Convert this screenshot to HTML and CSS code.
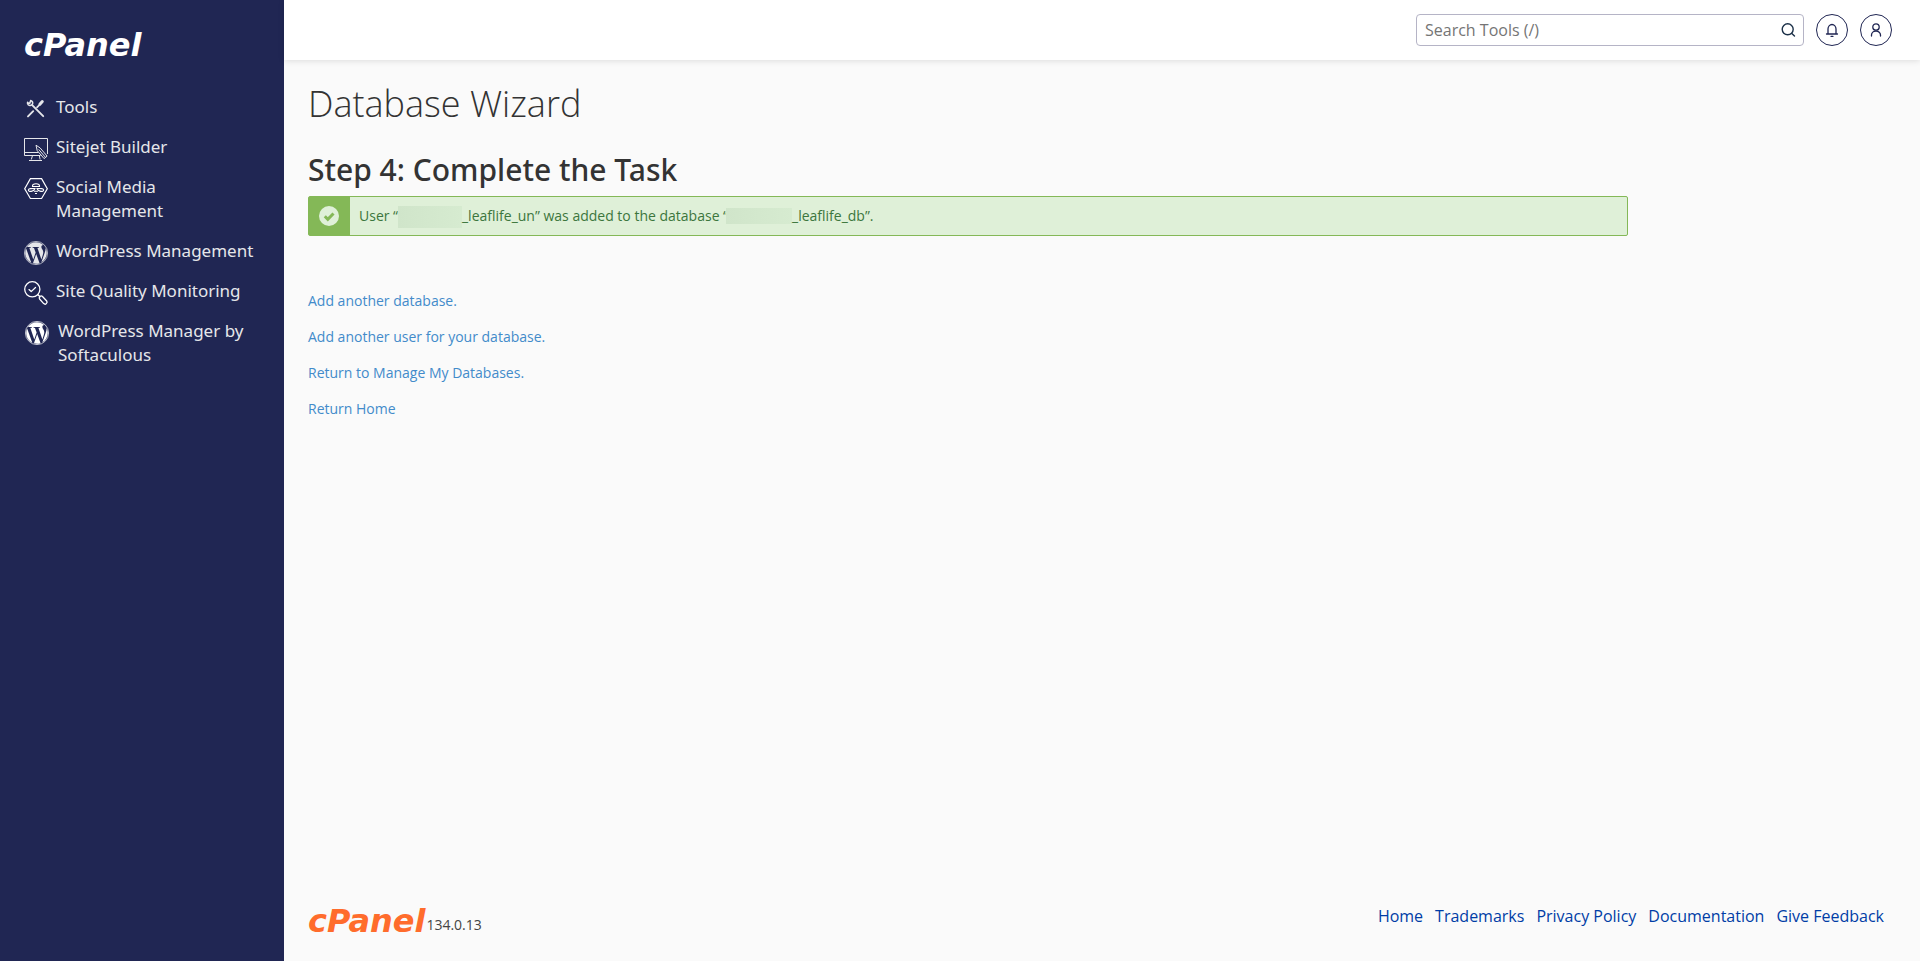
FILE: index.html
```html
<!DOCTYPE html>
<html lang="en">
<head>
<meta charset="utf-8">
<title>cPanel - Database Wizard</title>
<link rel="stylesheet" href="styles.css">
</head>
<body>
<svg class="defs" width="0" height="0" aria-hidden="true">
  <symbol id="wordpress" viewBox="0 0 24 24">
    <path fill="currentColor" d="M21.469 6.825c.84 1.537 1.318 3.3 1.318 5.175 0 3.979-2.156 7.456-5.363 9.325l3.295-9.527c.615-1.54.82-2.771.82-3.864 0-.405-.026-.78-.07-1.11m-7.981.105c.647-.03 1.232-.105 1.232-.105.582-.075.514-.93-.067-.899 0 0-1.755.135-2.88.135-1.064 0-2.85-.15-2.85-.15-.585-.03-.661.855-.075.885 0 0 .54.061 1.125.09l1.68 4.605-2.37 7.08L5.354 6.9c.649-.03 1.234-.1 1.234-.1.585-.075.516-.93-.065-.896 0 0-1.746.138-2.874.138-.2 0-.438-.008-.69-.015C4.911 3.15 8.235 1.215 12 1.215c2.809 0 5.365 1.072 7.286 2.833-.046-.003-.091-.009-.141-.009-1.06 0-1.812.923-1.812 1.914 0 .89.513 1.643 1.06 2.531.411.72.89 1.643.89 2.977 0 .915-.354 1.994-.821 3.479l-1.075 3.585-3.9-11.61.001.014zM12 22.784c-1.059 0-2.081-.153-3.048-.437l3.237-9.406 3.315 9.087c.024.053.05.101.078.149-1.12.393-2.325.609-3.582.609M1.211 12c0-1.564.336-3.05.935-4.39L7.29 21.709C3.694 19.96 1.212 16.271 1.211 12"/>
    <circle cx="12" cy="12" r="11.6" fill="none" stroke="currentColor" stroke-width=".7"/>
  </symbol>
</svg>
<div class="shell">
  <aside class="sidebar">
    <a class="brand" href="#">cPanel</a>
    <nav class="menu" aria-label="Main">
      <a class="menu-item" href="#">
        <svg class="menu-icon" viewBox="0 -1 24 24" fill="none" stroke="currentColor" stroke-linecap="round">
          <path stroke-width="1.9" d="M8.200 7.200 19.200 18.200M4 18.400l5.200-5.200"/>
          <path stroke-width="1.600" d="M3.600 4.400v1.200a2.600 2.600 0 0 0 4.800.6 2.600 2.600 0 0 0-1.700-3.700M3.600 4.800l2.100.6 1-2.600"/>
          <path stroke-width="1.700" d="m13 9.300 2-2"/>
          <path stroke-width="3" d="m15.900 6.300 2.400-2.700"/>
        </svg>
        <span>Tools</span>
      </a>
      <a class="menu-item" href="#">
        <svg class="menu-icon" viewBox="0 -1 24 24" fill="none" stroke="currentColor">
          <path d="M16.500 17.500H.5V.5h23V16M.5 14.500h14M8.500 17.500l-1.200 4M15.300 17.500l.8 4M5 22.500h13"/>
          <path d="m12 7.200 1.200 5.400 6.900 8 3-2.500-6.900-8.100zM14.700 11.400l6.600 7.800"/>
        </svg>
        <span>Sitejet Builder</span>
      </a>
      <a class="menu-item" href="#">
        <svg class="menu-icon bright" viewBox="0 -1 24 24" fill="none" stroke="currentColor">
          <path stroke-width="1.2" d="M6.400.7h11.200L23.300 10.700l-5.700 9.800H6.400L.7 10.700z"/>
          <path stroke-width="1.1" d="M8.500 9V8a3.500 2.300 0 0 1 7 0v1M8 8.500h8M11 10.500c-3 0-6.600-.2-6.600 1.400 0 2.400 5.400 1.900 6.600-1.400zM13 10.500c3 0 6.600-.2 6.600 1.400 0 2.400-5.400 1.900-6.600-1.400zM10 13.300h4M11 15.500h2"/>
        </svg>
        <span>Social Media Management</span>
      </a>
      <a class="menu-item" href="#">
        <svg class="menu-icon"><use href="#wordpress"/></svg>
        <span>WordPress Management</span>
      </a>
      <a class="menu-item" href="#">
        <svg class="menu-icon bright" viewBox="0 0 24 24" fill="none" stroke="currentColor" stroke-width="1.3" stroke-linecap="round" stroke-linejoin="round">
          <circle cx="8.300" cy="8.300" r="7.600"/>
          <path d="m5 8.600 2.200 2L11.500 6.500M14 13.700l2 2M16 15.500c1-1 1.800-.7 2.500 0l4.200 4.500c1 1.200 0 2.200-.4 2.600-.6.600-1.700.8-2.600 0L15.600 18c-.7-.8-.4-1.700.4-2.500z"/>
        </svg>
        <span>Site Quality Monitoring</span>
      </a>
      <a class="menu-item plugin" href="#">
        <svg class="menu-icon bright"><use href="#wordpress"/></svg>
        <span>WordPress Manager by Softaculous</span>
      </a>
    </nav>
  </aside>

  <div class="page">
    <header class="topbar">
      <form class="search" role="search">
        <input class="search-input" type="text" placeholder="Search Tools (/)" aria-label="Search Tools">
        <button class="search-button" type="button" aria-label="Search">
          <svg width="16" height="16" viewBox="0 0 16 16" fill="none" stroke="currentColor" stroke-width="1.400" stroke-linecap="round"><circle cx="7.700" cy="7.300" r="5.500"/><path d="m11.800 11.400 2.700 2.700"/></svg>
        </button>
      </form>
      <button class="round-button" type="button" aria-label="Notifications">
        <svg width="16" height="16" viewBox="0 0 16 16" fill="none" stroke="currentColor" stroke-width="1.300" stroke-linecap="round" stroke-linejoin="round"><path d="M2.500 12h11M4 12V7a4 4.500 0 0 1 8 0v5M7 14.300h2"/></svg>
      </button>
      <button class="round-button" type="button" aria-label="User preferences">
        <svg width="16" height="16" viewBox="0 0 16 16" fill="none" stroke="currentColor" stroke-width="1.300" stroke-linecap="round"><circle cx="8" cy="5" r="3.200"/><path d="M3.500 14v-1a4.500 4 0 0 1 9 0v1"/></svg>
      </button>
    </header>

    <main class="content">
      <h1 class="title">Database Wizard</h1>
      <h2 class="step">Step 4: Complete the Task</h2>
      <div class="alert" role="status">
        <div class="alert-badge">
          <svg width="20" height="20" viewBox="0 0 20 20"><circle cx="10" cy="10" r="10" fill="#dff0d8"/><path d="m5.800 10.300 3 3 5.700-5.800" fill="none" stroke="#84b857" stroke-width="3"/></svg>
        </div>
        <p class="alert-text">User “<span class="redacted"></span>_leaflife_un” was added to the database “<span class="redacted short"></span>_leaflife_db”.</p>
      </div>
      <ul class="links">
        <li><a href="#">Add another database.</a></li>
        <li><a href="#">Add another user for your database.</a></li>
        <li><a href="#">Return to Manage My Databases.</a></li>
        <li><a href="#">Return Home</a></li>
      </ul>
    </main>

    <footer class="footer">
      <div class="product"><a class="brand orange" href="#">cPanel</a><span class="version">134.0.13</span></div>
      <nav class="footer-links" aria-label="Footer">
        <a href="#">Home</a>
        <a href="#">Trademarks</a>
        <a href="#">Privacy Policy</a>
        <a href="#">Documentation</a>
        <a href="#">Give Feedback</a>
      </nav>
    </footer>
  </div>
</div>
</body>
</html>
```
FILE: styles.css
```css
* { box-sizing: border-box; }

body {
  margin: 0;
  background: #fafafa;
  color: #333;
  font: 14px/20px "Open Sans", "Noto Sans", sans-serif;
}

a { text-decoration: none; }

.defs { display: none; }

.shell { display: flex; min-height: 100vh; }

.sidebar {
  flex: 0 0 284px;
  padding: 28px 24px;
  background: #202653;
}

.brand {
  display: block;
  color: #fff;
  font: italic 700 32px/34px "DejaVu Sans", sans-serif;
}
.brand.orange { color: #ff6c2c; }

.menu { padding-top: 25px; }

.menu-item {
  display: flex;
  gap: 8px;
  padding: 8px 0;
  color: #e5e6ea;
  font: 17px/24px "Noto Sans", sans-serif;
}
.menu-icon { flex: none; width: 24px; height: 24px; margin: 2px 0 -2px; overflow: visible; }
.bright { color: #fff; }
.plugin { gap: 9px; padding-left: 1px; }

.page { flex: 1; display: flex; flex-direction: column; min-width: 0; }

.topbar {
  display: flex;
  justify-content: flex-end;
  align-items: center;
  gap: 12px;
  height: 60px;
  padding: 0 28px;
  background: #fff;
  box-shadow: 0 1px 6px rgba(0, 0, 0, .12);
}

.search {
  display: flex;
  width: 388px;
  height: 32px;
  border: 1px solid #b5b4c6;
  border-radius: 4px;
}
.search-input {
  flex: 1;
  min-width: 0;
  padding: 0 8px;
  border: 0;
  background: none;
  font: 16px/24px "Open Sans", sans-serif;
}
.search-input::placeholder { color: #757575; }
.search-button {
  display: grid;
  place-items: center;
  width: 30px;
  padding: 0;
  border: 0;
  background: none;
  color: #1b3048;
}
.round-button {
  display: grid;
  place-items: center;
  width: 32px;
  height: 32px;
  padding: 0;
  border: 1px solid #202653;
  border-radius: 50%;
  background: #fff;
  color: #202653;
}

.content { flex: 1; padding: 20px 24px; }

.title { margin: 0; font-size: 36px; line-height: 48px; font-weight: 300; }
.step {
  margin: 24px 0 8px;
  font-family: "Noto Sans", sans-serif;
  font-size: 30px;
  line-height: 36px;
  font-weight: 500;
}

.alert {
  display: flex;
  max-width: 1320px;
  min-height: 40px;
  border: 1px solid #84b857;
  border-radius: 2px;
  background: #dff0d8;
  color: #3c763d;
}
.alert-badge { display: flex; align-items: center; width: 41px; padding-left: 10px; background: #84b857; }
.alert-text { margin: 0; padding: 9px; }
.redacted {
  display: inline-block;
  width: 64px;
  height: 22px;
  margin: -4px 0;
  background: linear-gradient(to right, #d0e5ca, #d6ebd0);
  vertical-align: middle;
}
.short { height: 16px; margin: -3px 0 0 -2px; width: 66px; }

.links { margin: 0; padding: 55px 0 0; list-style: none; }
.links li { margin-bottom: 16px; }
.links a { color: #428bca; }

.footer {
  display: flex;
  justify-content: space-between;
  align-items: flex-start;
  padding: 0 36px 23px 24px;
}
.product { display: flex; align-items: flex-end; gap: 1px; }
.version { padding-bottom: 3px; color: #444; }
.footer-links { display: flex; gap: 12px; font-size: 16px; line-height: 24px; }
.footer-links a { color: #003da6; }
```
